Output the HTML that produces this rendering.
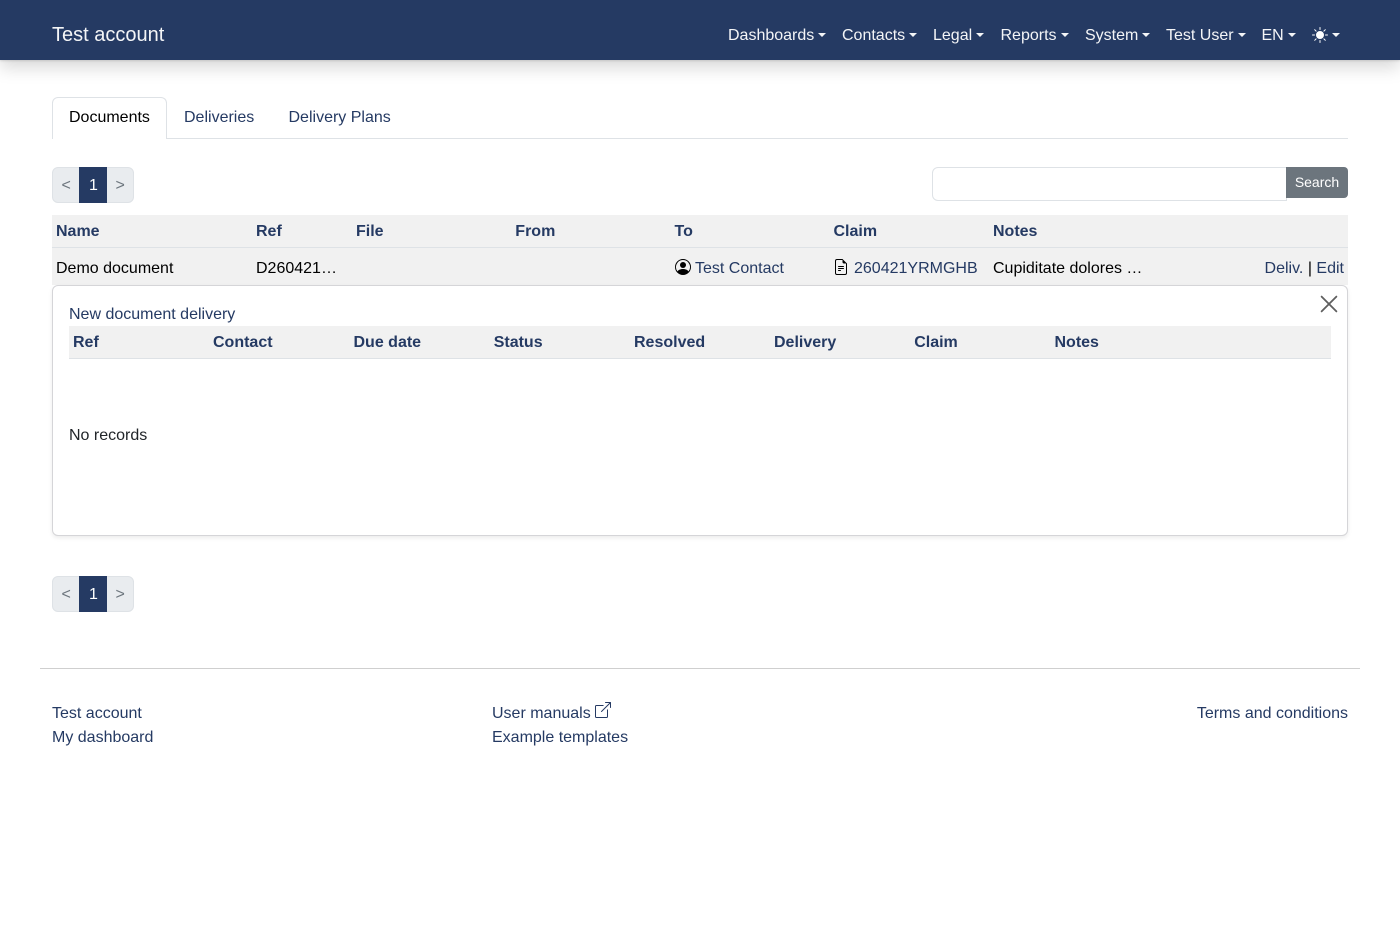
<!DOCTYPE html>
<html lang="en"><head><meta charset="utf-8"><title>Documents</title>
<style>
*{box-sizing:border-box}
html,body{margin:0;padding:0;background:#fff}
body{position:relative;width:1400px;height:940px;overflow:hidden;font:16px/24px "Liberation Sans",sans-serif;color:#212529}
.a{position:absolute;white-space:nowrap}
a{color:#253a63;text-decoration:none}
.l{color:#253a63}
.b{font-weight:700;color:#253a63}
.nav{position:absolute;left:0;top:0;width:1400px;height:60px;background:#253a63;box-shadow:0 8px 16px rgba(0,0,0,.15),0 1px 2px rgba(0,0,0,.12)}
.nav .a{color:rgba(255,255,255,.95)}
.c{position:absolute;width:0;height:0;border-top:4.8px solid #fff;border-left:4.8px solid transparent;border-right:4.8px solid transparent;opacity:.95}
.pg{position:absolute;left:52px;width:82px;height:36px;background:#e9ecef;border:1px solid #dee2e6;border-radius:6px}
.pg i{position:absolute;top:-1px;left:26px;width:28px;height:36px;background:#253a63}
.pg span{position:absolute;top:6px;line-height:24px;color:#6c757d}
.pg .n{left:36px;color:#fff;top:6px}
svg{position:absolute;display:block}
</style></head><body>
<div class="nav">
<span class="a" style="left:52px;top:20px;font-size:20px;line-height:30px;color:rgba(255,255,255,.95)">Test account</span>
<span class="a" style="left:728px;top:24px">Dashboards</span><i class="c" style="left:817.5px;top:33px"></i>
<span class="a" style="left:842px;top:24px">Contacts</span><i class="c" style="left:908.5px;top:33px"></i>
<span class="a" style="left:933px;top:24px">Legal</span><i class="c" style="left:975.5px;top:33px"></i>
<span class="a" style="left:1000.5px;top:24px">Reports</span><i class="c" style="left:1060.5px;top:33px"></i>
<span class="a" style="left:1085px;top:24px">System</span><i class="c" style="left:1141.5px;top:33px"></i>
<span class="a" style="left:1166px;top:24px">Test User</span><i class="c" style="left:1237.5px;top:33px"></i>
<span class="a" style="left:1261.5px;top:24px">EN</span><i class="c" style="left:1287.5px;top:33px"></i>
<svg style="left:1312px;top:27px" width="16" height="16" viewBox="0 0 16 16" fill="#fff"><path d="M8 12a4 4 0 1 0 0-8 4 4 0 0 0 0 8zM8 0a.5.5 0 0 1 .5.5v2a.5.5 0 0 1-1 0v-2A.5.5 0 0 1 8 0zm0 13a.5.5 0 0 1 .5.5v2a.5.5 0 0 1-1 0v-2A.5.5 0 0 1 8 13zm8-5a.5.5 0 0 1-.5.5h-2a.5.5 0 0 1 0-1h2a.5.5 0 0 1 .5.5zM3 8a.5.5 0 0 1-.5.5h-2a.5.5 0 0 1 0-1h2A.5.5 0 0 1 3 8zm10.657-5.657a.5.5 0 0 1 0 .707l-1.414 1.415a.5.5 0 1 1-.707-.708l1.414-1.414a.5.5 0 0 1 .707 0zm-9.193 9.193a.5.5 0 0 1 0 .707L3.05 13.657a.5.5 0 0 1-.707-.707l1.414-1.414a.5.5 0 0 1 .707 0zm9.193 2.121a.5.5 0 0 1-.707 0l-1.414-1.414a.5.5 0 0 1 .707-.707l1.414 1.414a.5.5 0 0 1 0 .707zM4.464 4.465a.5.5 0 0 1-.707 0L2.343 3.05a.5.5 0 1 1 .707-.707l1.414 1.414a.5.5 0 0 1 0 .708z"/></svg>
<i class="c" style="left:1331.5px;top:33px"></i>
</div>

<div class="a" style="left:52px;top:138px;width:1296px;height:1px;background:#dee2e6"></div>
<div class="a" style="left:52px;top:97px;width:115px;height:42px;background:#fff;border:1px solid #dee2e6;border-bottom:0;border-radius:6px 6px 0 0"></div>
<span class="a" style="left:69px;top:106px;color:#000">Documents</span>
<a class="a" style="left:184px;top:106px">Deliveries</a>
<a class="a" style="left:288.5px;top:106px">Delivery Plans</a>

<div class="pg" style="top:167px"><span style="left:8.5px">&lt;</span><i></i><span class="n">1</span><span style="left:62.5px">&gt;</span></div>

<div class="a" style="left:932px;top:167px;width:355px;height:34px;background:#fff;border:1px solid #dee2e6;border-radius:6px 0 0 6px"></div>
<div class="a" style="left:1286px;top:167px;width:62px;height:31px;background:#6c757d;border-radius:0 4px 4px 0;color:#fff;font-size:14px;line-height:31px;text-align:center">Search</div>

<div class="a" style="left:52px;top:215px;width:1296px;height:70px;background:#f1f1f1"></div>
<div class="a" style="left:52px;top:247px;width:1296px;height:1px;background:#dee2e6"></div>
<span class="a b" style="left:56px;top:220px">Name</span>
<span class="a b" style="left:256px;top:220px">Ref</span>
<span class="a b" style="left:356px;top:220px">File</span>
<span class="a b" style="left:515.3px;top:220px">From</span>
<span class="a b" style="left:674.5px;top:220px">To</span>
<span class="a b" style="left:833.5px;top:220px">Claim</span>
<span class="a b" style="left:993px;top:220px">Notes</span>

<span class="a" style="left:56px;top:257px;color:#000">Demo document</span>
<span class="a" style="left:256px;top:257px;color:#000">D260421…</span>
<svg style="left:674.5px;top:259px" width="16" height="16" viewBox="0 0 16 16" fill="#000"><path d="M11 6a3 3 0 1 1-6 0 3 3 0 0 1 6 0z"/><path fill-rule="evenodd" d="M0 8a8 8 0 1 1 16 0A8 8 0 0 1 0 8zm8-7a7 7 0 0 0-5.468 11.37C3.242 11.226 4.805 10 8 10s4.757 1.225 5.468 2.37A7 7 0 0 0 8 1z"/></svg>
<a class="a" style="left:695px;top:257px">Test Contact</a>
<svg style="left:833px;top:259px" width="16" height="16" viewBox="0 0 16 16" fill="#000"><path d="M5.5 7a.5.5 0 0 0 0 1h5a.5.5 0 0 0 0-1h-5zM5 9.5a.5.5 0 0 1 .5-.5h5a.5.5 0 0 1 0 1h-5a.5.5 0 0 1-.5-.5zm0 2a.5.5 0 0 1 .5-.5h2a.5.5 0 0 1 0 1h-2a.5.5 0 0 1-.5-.5z"/><path d="M9.5 0H4a2 2 0 0 0-2 2v12a2 2 0 0 0 2 2h8a2 2 0 0 0 2-2V4.5L9.5 0zm0 1v2A1.5 1.5 0 0 0 11 4.5h2V14a1 1 0 0 1-1 1H4a1 1 0 0 1-1-1V2a1 1 0 0 1 1-1h5.5z"/></svg>
<a class="a" style="left:854px;top:257px">260421YRMGHB</a>
<span class="a" style="left:993px;top:257px;color:#000">Cupiditate dolores …</span>
<span class="a" style="right:56px;top:257px;color:#000"><a>Deliv.</a> | <a>Edit</a></span>

<div class="a" style="left:52px;top:285px;width:1296px;height:251px;background:#fff;border:1px solid #d5d5d8;border-radius:6px;box-shadow:0 2px 4px rgba(0,0,0,.08)"></div>
<a class="a" style="left:69px;top:303px">New document delivery</a>
<svg style="left:1319px;top:294px" width="20" height="20" viewBox="0 0 20 20" stroke="#5f5f5f" stroke-width="1.8" stroke-linecap="round" fill="none"><path d="M2.6 2.6L17.4 17.4M17.4 2.6L2.6 17.4"/></svg>
<div class="a" style="left:69px;top:326px;width:1262px;height:33px;background:#f1f1f1;border-bottom:1px solid #dee2e6"></div>
<span class="a b" style="left:73px;top:331px">Ref</span>
<span class="a b" style="left:213px;top:331px">Contact</span>
<span class="a b" style="left:353.5px;top:331px">Due date</span>
<span class="a b" style="left:493.7px;top:331px">Status</span>
<span class="a b" style="left:634px;top:331px">Resolved</span>
<span class="a b" style="left:774px;top:331px">Delivery</span>
<span class="a b" style="left:914.2px;top:331px">Claim</span>
<span class="a b" style="left:1054.5px;top:331px">Notes</span>
<span class="a" style="left:69px;top:424px">No records</span>

<div class="pg" style="top:576px"><span style="left:8.5px">&lt;</span><i></i><span class="n">1</span><span style="left:62.5px">&gt;</span></div>

<div class="a" style="left:40px;top:668px;width:1320px;height:1px;background:#cfcfcf"></div>
<a class="a" style="left:52px;top:702px">Test account</a>
<a class="a" style="left:52px;top:726px">My dashboard</a>
<a class="a" style="left:492px;top:702px">User manuals</a>
<svg style="left:595px;top:702px" width="16" height="16" viewBox="0 0 16 16" fill="#253a63"><path fill-rule="evenodd" d="M8.636 3.5a.5.5 0 0 0-.5-.5H1.5A1.5 1.5 0 0 0 0 4.5v10A1.5 1.5 0 0 0 1.5 16h10a1.5 1.5 0 0 0 1.5-1.5V7.864a.5.5 0 0 0-1 0V14.5a.5.5 0 0 1-.5.5h-10a.5.5 0 0 1-.5-.5v-10a.5.5 0 0 1 .5-.5h6.636a.5.5 0 0 0 .5-.5z"/><path fill-rule="evenodd" d="M16 .5a.5.5 0 0 0-.5-.5h-5a.5.5 0 0 0 0 1h3.793L6.146 9.146a.5.5 0 1 0 .708.708L15 1.707V5.5a.5.5 0 0 0 1 0v-5z"/></svg>
<a class="a" style="left:492px;top:726px">Example templates</a>
<a class="a" style="right:52px;top:702px">Terms and conditions</a>
</body></html>
